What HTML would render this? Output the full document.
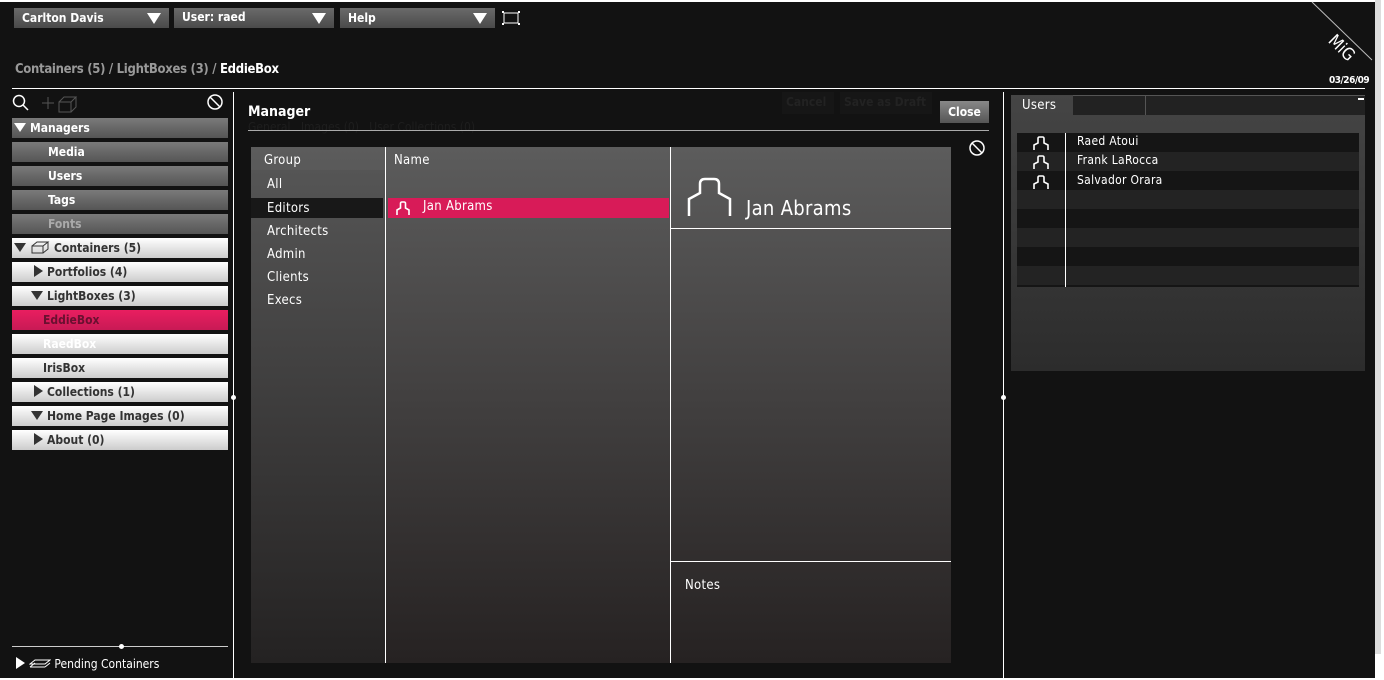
<!DOCTYPE html>
<html><head><style>
*{margin:0;padding:0;box-sizing:border-box}
body{width:1384px;height:680px;background:#fff;position:relative;overflow:hidden;font-family:"DejaVu Sans Condensed","Liberation Sans",sans-serif}
.a{position:absolute}
#app{left:0;top:2px;width:1375px;height:676px;background:#121212}
.dd{height:20px;background:linear-gradient(#6a6a6a,#4a4a4a);color:#fff;font-weight:bold;font-size:12px;line-height:20px;padding-left:8px}
.dd:after{content:"";position:absolute;right:8px;top:5px;border-left:7px solid transparent;border-right:7px solid transparent;border-top:11px solid #fff}
.si{left:12px;width:216px;height:20px;font-weight:bold;font-size:12px;line-height:20px}
.dk{background:linear-gradient(#7a7a7a,#555);color:#fff;padding-left:36px}
.lt{background:linear-gradient(#fff,#ccc);color:#333}
.tri{display:inline-block;width:0;height:0;border-left:9px solid #333;border-top:6px solid transparent;border-bottom:6px solid transparent;vertical-align:-1px;margin-right:4px}
.trd{display:inline-block;width:0;height:0;border-top:9px solid #333;border-left:6px solid transparent;border-right:6px solid transparent;vertical-align:0;margin-right:4px}
.n{font-family:"DejaVu Sans Condensed","Liberation Sans",sans-serif;color:#fff;font-size:13px;letter-spacing:.3px}
.vl{width:1px;background:#fff}
</style></head><body>
<div id="app" class="a"></div>
<div class="a" style="left:1375px;top:0;width:6px;height:654px;background:#ddd"></div>
<div class="a dd" style="left:14px;top:8px;width:155px">Carlton Davis</div>
<div class="a dd" style="left:174px;top:8px;width:160px;line-height:18px">User: raed</div>
<div class="a dd" style="left:340px;top:8px;width:155px">Help</div>
<svg class="a" style="left:502px;top:10px" width="18" height="16"><path d="M2 3h14v10H2z" fill="none" stroke="#fff"/><g fill="#fff"><rect x="0" y="1" width="2" height="2"/><rect x="16" y="1" width="2" height="2"/><rect x="0" y="13" width="2" height="2"/><rect x="16" y="13" width="2" height="2"/></g></svg>
<div class="a" style="left:15px;top:62px;font-size:13px;letter-spacing:-0.3px;font-weight:bold;color:#999">Containers (5) / LightBoxes (3) / <span style="color:#fff">EddieBox</span></div>
<svg class="a" style="left:1300px;top:0" width="75" height="75"><line x1="12" y1="2" x2="72" y2="60" stroke="#bbb"/><text x="28" y="50" fill="#fff" font-size="17" font-family="DejaVu Sans Condensed,sans-serif" transform="rotate(45 38 45)">MiG</text></svg>
<div class="a" style="left:1329px;top:75px;color:#fff;font-size:10px;font-weight:bold;letter-spacing:-0.5px">03/26/09</div>
<div class="a" style="left:12px;top:88px;width:1353px;height:1px;background:#fff"></div>
<!-- sidebar -->
<svg class="a" style="left:12px;top:94px" width="220" height="20"><circle cx="7" cy="7" r="5.5" fill="none" stroke="#fff" stroke-width="1.5"/><line x1="11" y1="11" x2="16" y2="16" stroke="#fff" stroke-width="1.5"/><path d="M36 3v12M30 9h12" stroke="#555"/><path d="M47 8h12v10H47zM47 8l5-5h12l-5 5M59 18l5-5V3" fill="none" stroke="#555"/><circle cx="203" cy="8" r="7" fill="none" stroke="#fff" stroke-width="1.5"/><line x1="198" y1="3" x2="208" y2="13" stroke="#fff" stroke-width="1.5"/></svg>
<div class="a si dk" style="top:118px;padding-left:2px"><span class="trd" style="border-top-color:#fff"></span>Managers</div>
<div class="a si dk" style="top:142px">Media</div>
<div class="a si dk" style="top:166px">Users</div>
<div class="a si dk" style="top:190px">Tags</div>
<div class="a si dk" style="top:214px;color:#aaa">Fonts</div>
<div class="a si lt" style="top:238px;padding-left:2px"><span class="trd"></span><svg width="22" height="14" style="vertical-align:-2px;margin-right:2px"><path d="M2 6h11v7H2zM2 6l5-4h11l-5 4M13 13l5-4V2" fill="none" stroke="#333"/></svg>Containers (5)</div>
<div class="a si lt" style="top:262px;padding-left:22px"><span class="tri"></span>Portfolios (4)</div>
<div class="a si lt" style="top:286px;padding-left:19px"><span class="trd"></span>LightBoxes (3)</div>
<div class="a si" style="top:310px;background:linear-gradient(#e91e60,#c81a55);color:#6a1030;padding-left:31px">EddieBox</div>
<div class="a si lt" style="top:334px;color:#fff;padding-left:31px">RaedBox</div>
<div class="a si lt" style="top:358px;padding-left:31px">IrisBox</div>
<div class="a si lt" style="top:382px;padding-left:22px"><span class="tri"></span>Collections (1)</div>
<div class="a si lt" style="top:406px;padding-left:19px"><span class="trd"></span>Home Page Images (0)</div>
<div class="a si lt" style="top:430px;padding-left:22px"><span class="tri"></span>About (0)</div>
<div class="a vl" style="left:233px;top:92px;height:586px"></div>
<div class="a" style="left:231px;top:395px;width:5px;height:5px;border-radius:50%;background:#fff"></div>
<div class="a" style="left:12px;top:646px;width:216px;height:1px;background:#ccc"></div>
<div class="a" style="left:119px;top:644px;width:5px;height:5px;border-radius:50%;background:#fff"></div>
<div class="a n" style="left:16px;top:657px;font-size:12px;letter-spacing:0"><span class="tri" style="border-left-color:#fff"></span><svg width="22" height="12" style="vertical-align:-1px"><path d="M1 7l5-4h15l-5 4zM1 10l5-4M16 10l5-4M1 10h15" fill="none" stroke="#fff"/></svg> Pending Containers</div>
<!-- manager -->
<div class="a" style="left:248px;top:104px;color:#fff;font-weight:bold;font-size:14px">Manager</div>
<div class="a" style="left:782px;top:92px;width:52px;height:22px;background:#161616;color:#222;font-size:12px;font-weight:bold;padding:3px 4px">Cancel</div>
<div class="a" style="left:840px;top:92px;width:92px;height:22px;background:#161616;color:#222;font-size:12px;font-weight:bold;padding:3px 4px">Save as Draft</div>
<div class="a" style="left:248px;top:120px;color:#1e1e1e;font-size:12px">General &nbsp; Images (0) &nbsp; User Collections (0)</div>
<div class="a" style="left:940px;top:101px;width:49px;height:22px;background:linear-gradient(#888,#555);color:#fff;font-weight:bold;font-size:12px;line-height:22px;text-align:center">Close</div>
<div class="a" style="left:248px;top:130px;width:741px;height:1px;background:#aaa"></div>
<svg class="a" style="left:968px;top:139px" width="18" height="18"><circle cx="9" cy="9" r="7" fill="none" stroke="#fff" stroke-width="1.5"/><line x1="4" y1="4" x2="14" y2="14" stroke="#fff" stroke-width="1.5"/></svg>
<div class="a" style="left:251px;top:147px;width:700px;height:516px;background:linear-gradient(#5c5c5c,#262222)"></div>
<div class="a" style="left:251px;top:170px;width:134px;height:493px;background:linear-gradient(#555,#242222)"></div>
<div class="a" style="left:251px;top:198px;width:132px;height:20px;background:#181818"></div>
<div class="a" style="left:388px;top:198px;width:281px;height:20px;background:#d81b58"></div>
<div class="a vl" style="left:385px;top:147px;height:516px"></div>
<div class="a vl" style="left:670px;top:147px;height:516px"></div>
<div class="a" style="left:670px;top:228px;width:281px;height:1px;background:#fff"></div>
<div class="a" style="left:670px;top:561px;width:281px;height:1px;background:#fff"></div>
<div class="a n" style="left:264px;top:153px">Group</div>
<div class="a n" style="left:267px;top:177px">All</div>
<div class="a n" style="left:267px;top:201px">Editors</div>
<div class="a n" style="left:267px;top:224px">Architects</div>
<div class="a n" style="left:267px;top:247px">Admin</div>
<div class="a n" style="left:267px;top:270px">Clients</div>
<div class="a n" style="left:267px;top:293px">Execs</div>
<div class="a n" style="left:394px;top:153px">Name</div>
<svg class="a" style="left:395px;top:199px" width="16" height="18"><path d="M2 16V11l3.5-2V4.5Q5.5 3 7 3h2Q10.5 3 10.5 4.5V9l3.5 2v5" fill="none" stroke="#fff" stroke-width="1.6"/></svg>
<div class="a n" style="left:423px;top:199px">Jan Abrams</div>
<svg class="a" style="left:686px;top:176px" width="48" height="42"><path d="M3 40V23l11-6V8Q14 3 19 3h9Q33 3 33 8v9l11 6v17" fill="none" stroke="#fff" stroke-width="2.5"/></svg>
<div class="a n" style="left:746px;top:196px;font-size:20px">Jan Abrams</div>
<div class="a n" style="left:685px;top:578px">Notes</div>
<div class="a vl" style="left:1003px;top:92px;height:586px"></div>
<div class="a" style="left:1001px;top:395px;width:5px;height:5px;border-radius:50%;background:#fff"></div>
<!-- users panel -->
<div class="a" style="left:1011px;top:95px;width:354px;height:276px;background:linear-gradient(#454545,#2c2c2c)"></div>
<div class="a" style="left:1073px;top:95px;width:292px;height:20px;background:#222;border-top:1px solid #555"></div>
<div class="a" style="left:1145px;top:95px;width:1px;height:20px;background:#555"></div>
<div class="a" style="left:1358px;top:98px;width:6px;height:2px;background:#fff"></div>
<div class="a n" style="left:1022px;top:98px">Users</div>
<div class="a" style="left:1017px;top:133px;width:342px;height:154px;background:repeating-linear-gradient(#151515 0 19px,#232323 19px 38px)"></div>
<div class="a vl" style="left:1065px;top:133px;height:154px"></div>
<svg class="a" style="left:1032px;top:134px" width="18" height="58"><g fill="none" stroke="#fff" stroke-width="1.6"><path d="M2 16V11l4-2V4.5Q6 3 7.5 3h3Q12 3 12 4.5V9l4 2v5"/><path d="M2 35V30l4-2v-4.5Q6 22 7.5 22h3q1.5 0 1.5 1.5V28l4 2v5"/><path d="M2 55V50l4-2v-4.5Q6 42 7.5 42h3q1.5 0 1.5 1.5V48l4 2v5"/></g></svg>
<div class="a n" style="left:1077px;top:134px;font-size:12px">Raed Atoui</div>
<div class="a n" style="left:1077px;top:153px;font-size:12px">Frank LaRocca</div>
<div class="a n" style="left:1077px;top:173px;font-size:12px">Salvador Orara</div>
</body></html>
